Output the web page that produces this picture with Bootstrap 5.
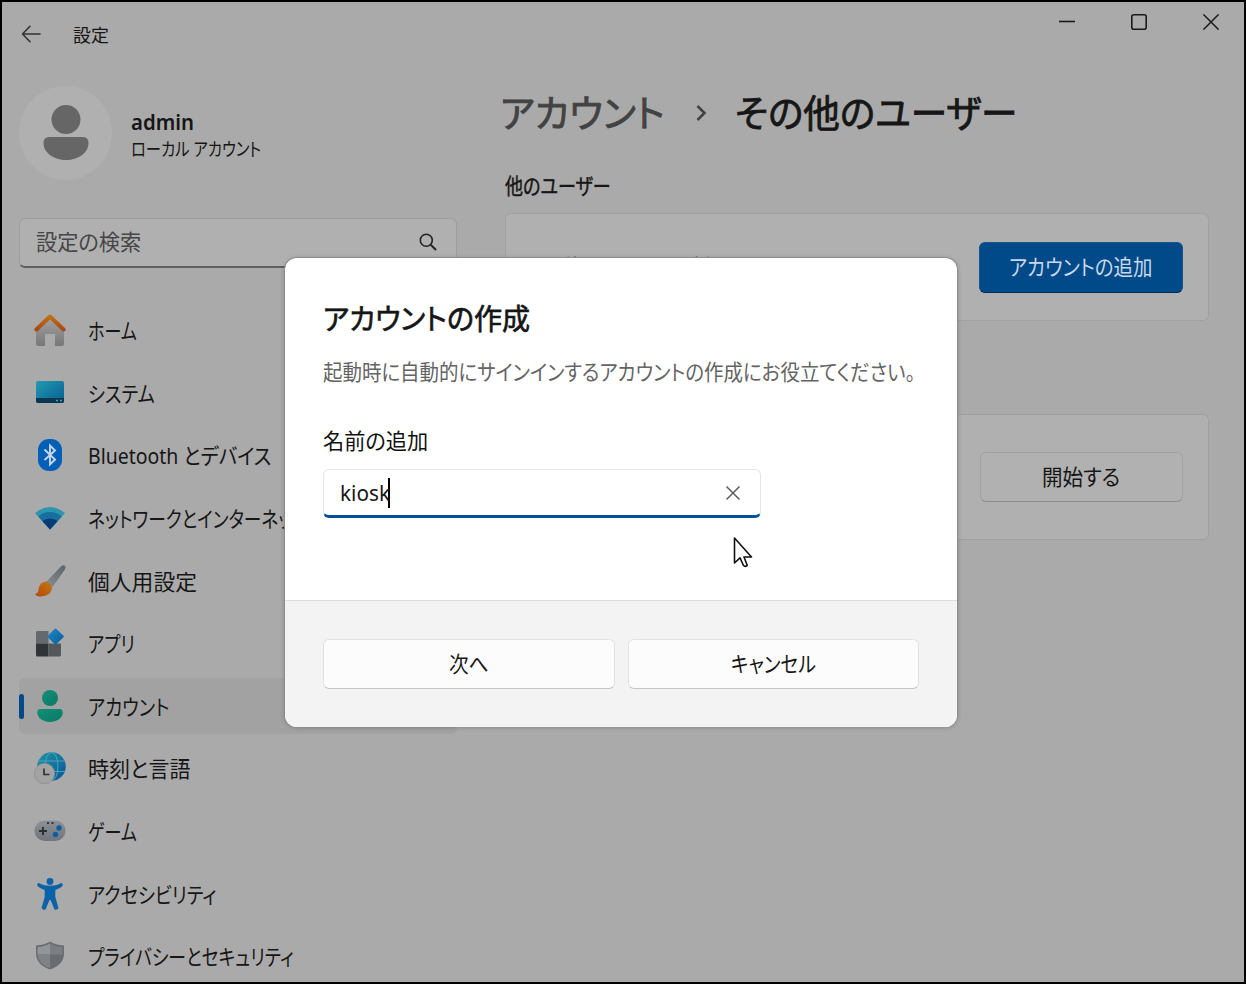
<!DOCTYPE html>
<html lang="ja">
<head>
<meta charset="utf-8">
<title>設定</title>
<link rel="stylesheet" href="https://cdn.jsdelivr.net/npm/bootstrap@5.3.0/dist/css/bootstrap.min.css">
<style>
body{margin:0;overflow:hidden;font-family:"Noto Sans","Noto Sans CJK JP",sans-serif;font-size:21.6px;line-height:30px;color:#161616}
.fit{display:inline-block;white-space:nowrap;transform-origin:0 50%;font-feature-settings:"palt"}
.window{width:1246px;height:984px;border:2px solid #000;background:#aaa;overflow:hidden}
.titlebar{flex:none;height:84px;padding:17px 25px 0 19px}
.titlebar .caption{font-size:18px;margin-left:32px;padding-top:1px;margin-bottom:-1px}
.winbtns{gap:56px;margin-top:-5px}
.side{width:438px;margin-left:17px}
.avatar{width:93px;height:94px;background:#b0b0b0}
.who{margin-left:19px;padding-top:6px}
.who .nm{font-weight:600;font-size:21px;line-height:28px}
.who .kind{font-size:18.5px;line-height:26px}
.search{height:50px;margin-top:38px;border:1px solid #9d9d9d;border-bottom:2px solid #5e5e5e;border-radius:6px;background:#b0b0b0;color:#464646;padding:0 19px 2px 16px}
.navlist{margin-top:31px}
.navrow{height:62.6px}
.navitem{height:56px;border-radius:6px;padding:0 0 0 15px;background:transparent;color:inherit;border:0}
.navitem svg{flex:none;width:32px;height:32px}
.navitem span{margin-left:22px}
.navitem>span{padding-top:2px}
.navitem.active{background:#a2a2a2;color:inherit;position:relative}
.navitem.active::before{content:"";position:absolute;left:0;top:16px;width:4.5px;height:25px;border-radius:3px;background:#004a8a}
.main{margin-left:48px;width:704px}
.crumb{height:54px;margin-left:-5px;font-size:37.5px;-webkit-text-stroke:.8px currentColor}
.crumb .up{color:#424242}
.sub{font-size:21.3px;-webkit-text-stroke:.45px currentColor;margin-top:31px;height:42px}
.panel{background:#b0b0b0;border:1px solid #a0a0a0;border-radius:6px;padding:0 25px 0 57px}
.p1{height:108px}.p2{height:126px;margin-top:93px}
.wbtn{--bs-btn-padding-x:0;--bs-btn-padding-y:0;font-size:inherit;line-height:30px;border-radius:6px;height:50px;width:203px;padding-bottom:1px;color:#161616;background:#b1b1b1;border:1px solid #a2a2a2;border-bottom-color:#8d8d8d}
.wbtn.pri{background:#004a8a;color:#c9d8e8;border-color:#15538a;border-bottom-color:#002c55;height:51px;width:204px;padding-bottom:0}
.dlg{position:absolute;left:285px;top:258px;width:672px;height:469px;background:#fff;border-radius:12px;overflow:hidden}
.shade{position:absolute;left:285px;top:258px;width:672px;height:468px;border-radius:12px;box-shadow:0 0 0 1px #8d8d8d,0 1px 4px 1px rgba(0,0,0,.2)}
.dlg .upper{height:342px;padding:41px 38px 0}
.dlg h1{font-size:29px;line-height:40px;font-weight:400;-webkit-text-stroke:.65px currentColor;margin:0}
.desc{color:#646464;margin:18px 0 0;height:32px}
.lab{margin-top:37px;height:30px;color:#111}
.field{margin-top:13px;width:438px;height:49px;border:1px solid #e6e6e6;border-bottom:3px solid #00509a;border-radius:6px;padding:0 19px 0 16px}
.caret{width:2px;height:30px;background:#000;margin-left:-2px}
.dlg .lower{height:127px;background:#f3f3f3;border-top:1px solid #dedede;padding:38px 38px 0;gap:13px}
.dlg .wbtn{flex:1 1 0;background:#fcfcfc;border-color:#e2e2e2;border-bottom-color:#c6c6c6}
.pointer{position:absolute;left:733px;top:536px}
</style>
</head>
<body>
<div class="window d-flex flex-column">
 <header class="titlebar d-flex align-items-start">
  <div class="d-flex align-items-center">
   <svg width="20" height="18" viewBox="0 0 20 18" fill="none" stroke="#333" stroke-width="1.6" stroke-linecap="round" stroke-linejoin="round"><path d="M19 9H1.5M9 1.3 1.5 9 9 16.7"/></svg>
   <span class="caption"><span class="fit" data-w="36">設定</span></span>
  </div>
  <div class="winbtns d-flex ms-auto">
   <svg width="16" height="16" stroke="#1a1a1a" stroke-width="1.6"><path d="M0 7.500H16"/></svg>
   <svg width="16" height="16" fill="none" stroke="#1a1a1a" stroke-width="1.6"><rect x=".8" y=".8" width="14.4" height="14.4" rx="2"/></svg>
   <svg width="16" height="16" stroke="#1a1a1a" stroke-width="1.5"><path d="M.4.4 15.6 15.6M15.6.4.4 15.6"/></svg>
  </div>
 </header>
 <div class="d-flex">
  <aside class="side">
   <div class="d-flex">
    <div class="avatar rounded-circle d-flex align-items-center justify-content-center">
     <svg width="46" height="56" fill="#666"><circle cx="23" cy="14.5" r="14.5"/><path d="M6 32H40Q45.500 32 45.500 38C45.500 48 35 55 23 55S.500 48 .500 38Q.500 32 6 32Z"/></svg>
    </div>
    <div class="who d-flex flex-column mt-3">
     <div class="nm"><span class="fit" data-w="63">admin</span></div>
     <div class="kind"><span class="fit" data-w="130">ローカル アカウント</span></div>
    </div>
   </div>
   <div class="search d-flex align-items-center justify-content-between">
    <span class="fit" data-w="105">設定の検索</span>
    <svg width="18" height="18" fill="none" stroke="#222" stroke-width="1.600"><circle cx="7.300" cy="7.300" r="6"/><path d="M11.600 11.600 17 17" stroke-width="2"/></svg>
   </div>
   <nav class="navlist nav flex-column flex-nowrap">
    <div class="navrow d-flex flex-column justify-content-center"><div class="navitem d-flex align-items-center">
     <svg viewBox="0 0 32 32"><defs><linearGradient id="h1" x2="0" y2="1"><stop stop-color="#bc7210"/><stop offset="1" stop-color="#ae4712"/></linearGradient><linearGradient id="h2" x2="0" y2="1"><stop stop-color="#a3a3a3"/><stop offset="1" stop-color="#777"/></linearGradient></defs><path fill="url(#h2)" d="M2 15 16 3 30 15V29.500Q30 32 27.500 32H21V20H11V32H4.500Q2 32 2 29.500Z"/><path d="M2.400 15.500 16 2.500 29.600 15.500" fill="none" stroke="url(#h1)" stroke-width="4" stroke-linecap="round" stroke-linejoin="round"/></svg>
     <span><span class="fit m-0" data-w="49">ホーム</span></span></div></div>
    <div class="navrow d-flex flex-column justify-content-center"><div class="navitem d-flex align-items-center">
     <svg viewBox="0 0 32 32"><defs><linearGradient id="s1" x2="1" y2="1"><stop stop-color="#229bb0"/><stop offset="1" stop-color="#075d94"/></linearGradient></defs><rect x="2" y="4" width="28" height="22" rx="2" fill="url(#s1)"/><path d="M2 21H30V24Q30 26 28 26H4Q2 26 2 24Z" fill="#08374f"/><path d="M22 23.500h2M26 23.500h2" stroke="#3aa6c8" stroke-width="1.500"/></svg>
     <span><span class="fit m-0" data-w="67">システム</span></span></div></div>
    <div class="navrow d-flex flex-column justify-content-center"><div class="navitem d-flex align-items-center">
     <svg viewBox="0 0 32 32"><rect x="4" width="24" height="32" rx="11" fill="#0060b8"/><path d="M10.500 10.500 21 20.500 16 25.500V6.500L21 11.500 10.500 21" fill="none" stroke="#c9d5e2" stroke-width="1.900"/></svg>
     <span><span class="fit m-0" data-w="183">Bluetooth とデバイス</span></span></div></div>
    <div class="navrow d-flex flex-column justify-content-center"><div class="navitem d-flex align-items-center">
     <svg viewBox="0 0 32 32"><defs><clipPath id="fan"><path d="M16 27.500 1 11Q16-1 31 11Z"/></clipPath></defs><g clip-path="url(#fan)"><rect width="32" height="32" fill="#2c96ad"/><circle cx="16" cy="27.500" r="17.500" fill="#176f9f"/><circle cx="16" cy="27.500" r="11" fill="#083c75"/></g></svg>
     <span><span class="fit m-0" data-w="218">ネットワークとインターネット</span></span></div></div>
    <div class="navrow d-flex flex-column justify-content-center"><div class="navitem d-flex align-items-center">
     <svg viewBox="0 0 32 32"><defs><linearGradient id="b1" x1="1" x2="0" y2="1"><stop stop-color="#5b626a"/><stop offset="1" stop-color="#8a8f96"/></linearGradient><linearGradient id="b2" x1="1" x2="0" y2="1"><stop stop-color="#c17a12"/><stop offset="1" stop-color="#ba4508"/></linearGradient></defs><path fill="url(#b1)" d="M12 17 27 1.500Q29.500-.500 31 1Q32 2.500 30.500 5L18.500 22Z"/><path fill="url(#b2)" d="M11.500 16.500Q17.500 18 18 23Q17 31 7 31.500Q2.500 32 1 29Q4.500 28.500 4.500 24Q5.500 17.500 11.500 16.500Z"/></svg>
     <span><span class="fit m-0" data-w="109">個人用設定</span></span></div></div>
    <div class="navrow d-flex flex-column justify-content-center"><div class="navitem d-flex align-items-center">
     <svg viewBox="0 0 32 32"><defs><linearGradient id="a1" x2="1" y2="1"><stop stop-color="#1b88c7"/><stop offset="1" stop-color="#0b5d9d"/></linearGradient></defs><path fill="#65686d" d="M3 4H14.500V16.500H2V5Z"/><path fill="#303338" d="M2 16.500H14.500V29.500H3.500Q2 29.500 2 28Z"/><path fill="#54585d" d="M14.500 16.500H27V28Q27 29.500 25.500 29.500H14.500Z"/><path d="M21.500 2.500 28.800 9.500 21.500 16.500 14.500 9.500Z" fill="url(#a1)" stroke="url(#a1)" stroke-width="2" stroke-linejoin="round"/></svg>
     <span><span class="fit m-0" data-w="47">アプリ</span></span></div></div>
    <div class="navrow d-flex flex-column justify-content-center"><div class="navitem active d-flex align-items-center">
     <svg viewBox="0 0 32 32"><defs><linearGradient id="p1" x2="1" y2="1"><stop stop-color="#119079"/><stop offset="1" stop-color="#0b7865"/></linearGradient></defs><g fill="url(#p1)"><circle cx="16" cy="8" r="8"/><path d="M6 19H26Q28.700 19 28.700 22.500C28.700 28.500 22 32 16 32S3.300 28.500 3.300 22.500Q3.300 19 6 19Z"/></g></svg>
     <span><span class="fit m-0" data-w="81">アカウント</span></span></div></div>
    <div class="navrow d-flex flex-column justify-content-center"><div class="navitem d-flex align-items-center">
     <svg viewBox="0 0 32 32"><defs><linearGradient id="g1" x2="1" y2="1"><stop stop-color="#22959e"/><stop offset="1" stop-color="#08559a"/></linearGradient></defs><circle cx="17.500" cy="14.500" r="14.300" fill="url(#g1)"/><g fill="none" stroke="#4ba3c4" stroke-width="1"><ellipse cx="17.500" cy="14.500" rx="6.500" ry="14"/><path d="M5 9H30M4 19.500H31"/></g><circle cx="10.500" cy="21.500" r="10.200" fill="#a3a3a3" stroke="#858585" stroke-width=".6"/><path d="M10 16.500V22.500H15.500" fill="none" stroke="#333" stroke-width="1.700"/></svg>
     <span><span class="fit m-0" data-w="102">時刻と言語</span></span></div></div>
    <div class="navrow d-flex flex-column justify-content-center"><div class="navitem d-flex align-items-center">
     <svg viewBox="0 0 32 32"><defs><linearGradient id="c1" x2="0" y2="1"><stop stop-color="#8d9197"/><stop offset="1" stop-color="#70757b"/></linearGradient></defs><rect x=".5" y="5.500" width="31" height="20.500" rx="10" fill="url(#c1)"/><path d="M9 12v8M5 16h8" stroke="#2d2f32" stroke-width="1.900"/><circle cx="25" cy="13" r="2.700" fill="#0a5ea8"/><circle cx="21.500" cy="19.500" r="2.700" fill="#0a5ea8"/><path d="M13 8h2M17.500 8h2" stroke="#33363a" stroke-width="1.800"/></svg>
     <span><span class="fit m-0" data-w="49">ゲーム</span></span></div></div>
    <div class="navrow d-flex flex-column justify-content-center"><div class="navitem d-flex align-items-center">
     <svg viewBox="0 0 32 32"><g fill="#0b62a8"><circle cx="16" cy="3.500" r="3.400"/><path d="M5 5Q8 7.500 16 7.800Q24 7.500 27 5Q29.500 5.500 28.500 8Q26 10.800 21.300 12V19L24.500 30Q23.500 32.500 20.500 31.500L16.500 22H15.500L11.500 31.500Q8.500 32.500 7.500 30L10.700 19V12Q6 10.800 3.500 8Q2.500 5.500 5 5Z"/></g></svg>
     <span><span class="fit m-0" data-w="128">アクセシビリティ</span></span></div></div>
    <div class="navrow d-flex flex-column justify-content-center"><div class="navitem d-flex align-items-center">
     <svg viewBox="0 0 32 32"><path d="M16 1.500Q21 5 30 5.500V14Q29.500 25 16 29.500Q2.500 25 2 14V5.500Q11 5 16 1.500Z" fill="#696d71"/><path d="M16 3.200Q20.500 6.500 28.500 7V14.500H16Z" fill="#7b7f83"/><path d="M16 3.200Q11.500 6.500 3.500 7V14.500H16Z" fill="#92969a"/><path d="M3.500 14.500H16V28Q4.500 24 3.500 14.500Z" fill="#7f8387"/></svg>
     <span><span class="fit m-0" data-w="206">プライバシーとセキュリティ</span></span></div></div>
   </nav>
  </aside>
  <main class="main">
   <div class="crumb d-flex align-items-center">
    <span class="fit up" data-w="165">アカウント</span>
    <svg class="mx-4" width="22" height="20" fill="none" stroke="#424242" stroke-width="2.500"><path d="M8.500 3 15.500 10 8.500 17"/></svg>
    <span class="fit" data-w="282">その他のユーザー</span>
   </div>
   <div class="sub"><span class="fit" data-w="106">他のユーザー</span></div>
   <section class="panel p1 d-flex align-items-center justify-content-between">
    <span class="fit" data-w="191">他のユーザーを追加する</span>
    <button class="btn wbtn pri"><span class="fit" data-w="143">アカウントの追加</span></button>
   </section>
   <section class="panel p2 d-flex align-items-center justify-content-end">
    <button class="btn wbtn"><span class="fit" data-w="78">開始する</span></button>
   </section>
  </main>
 </div>
</div>
<div class="shade"></div>
<div class="dlg" role="dialog">
 <div class="upper">
  <h1><span class="fit" data-w="207">アカウントの作成</span></h1>
  <p class="desc"><span class="fit" data-w="592">起動時に自動的にサインインするアカウントの作成にお役立てください。</span></p>
  <div class="lab"><span class="fit" data-w="105">名前の追加</span></div>
  <div class="field d-flex align-items-center">
   <span class="fit" data-w="50">kiosk</span><div class="caret"></div>
   <svg class="ms-auto" width="16" height="16" stroke="#5c5c5c" stroke-width="1.500"><path d="M1.500 1.500 14.500 14.500M14.500 1.500 1.500 14.500"/></svg>
  </div>
 </div>
 <div class="lower d-flex">
  <button class="btn wbtn"><span class="fit" data-w="40">次へ</span></button>
  <button class="btn wbtn"><span class="fit" data-w="85">キャンセル</span></button>
 </div>
</div>
<svg class="pointer" width="20" height="32" viewBox="0 0 20 32"><path d="M1.500 2V27L7 21.800 10.500 29.500Q12 31.200 14.200 29.300L11 21H18.500Z" fill="#fff" stroke="#111" stroke-width="1.600" stroke-linejoin="round"/></svg>
<script src="https://cdn.jsdelivr.net/npm/bootstrap@5.3.0/dist/js/bootstrap.bundle.min.js"></script>
<script>
// Condense each label to its UI width; the margin keeps the flow in step with the scaled text.
document.querySelectorAll('.fit').forEach(function(el){
  var w=+el.dataset.w, n=el.offsetWidth;
  el.style.transform='scaleX('+(w/n)+')';
  el.style.setProperty('margin-right',(w-n)+'px','important');
});
</script>
</body>
</html>
